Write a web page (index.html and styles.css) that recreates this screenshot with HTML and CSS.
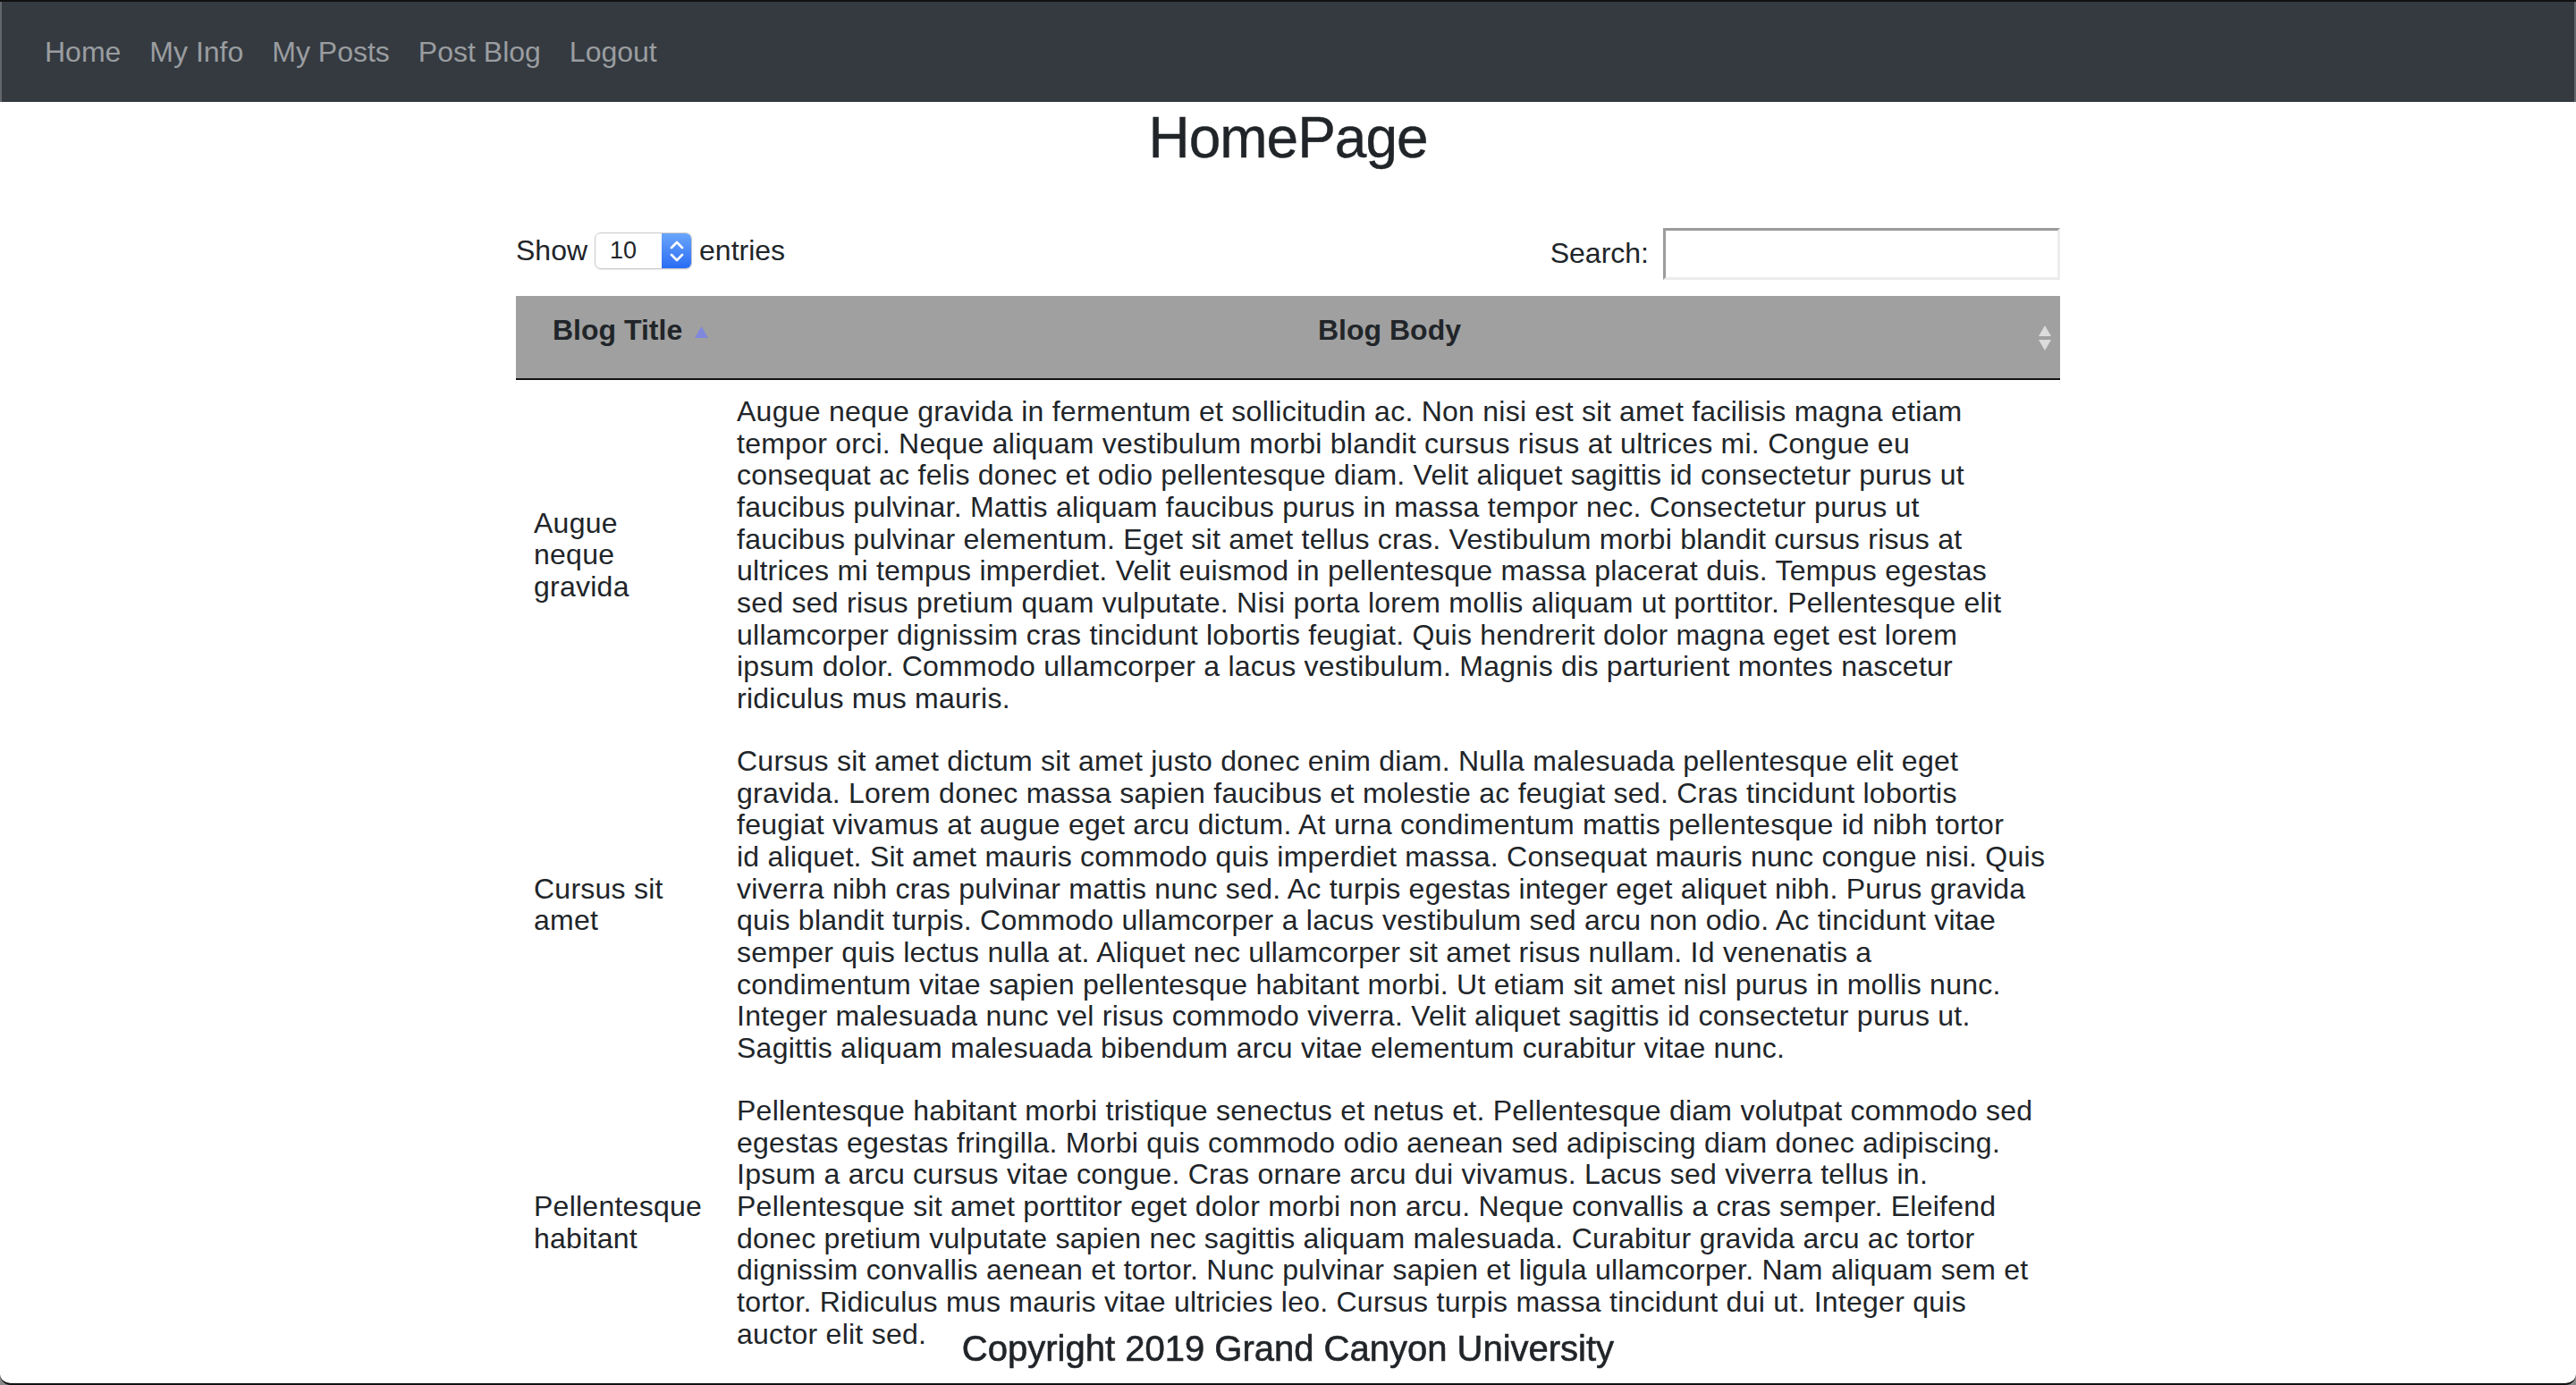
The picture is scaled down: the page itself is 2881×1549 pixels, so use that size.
FILE: index.html
```html
<!DOCTYPE html>
<html lang="en">
<head>
<meta charset="utf-8">
<title>HomePage</title>
<link rel="stylesheet" href="styles.css">
</head>
<body>
<div class="window">
  <nav class="navbar">
    <a class="nav-link" href="#">Home</a>
    <a class="nav-link" href="#">My Info</a>
    <a class="nav-link" href="#">My Posts</a>
    <a class="nav-link" href="#">Post Blog</a>
    <a class="nav-link" href="#">Logout</a>
  </nav>

  <h2 class="page-title">HomePage</h2>

  <div class="blog-wrap">
    <div class="controls">
      <div class="length">
        <span>Show</span>
        <span class="select">
          <span class="select-value">10</span>
          <span class="select-btn">
            <svg width="20" height="30" viewBox="0 0 20 30"><path d="M4 11 L10 5 L16 11" fill="none" stroke="#fff" stroke-width="2.6" stroke-linecap="round" stroke-linejoin="round"/><path d="M4 19 L10 25 L16 19" fill="none" stroke="#fff" stroke-width="2.6" stroke-linecap="round" stroke-linejoin="round"/></svg>
          </span>
        </span>
        <span>entries</span>
      </div>
      <div class="search">
        <span>Search:</span>
        <input class="search-input" type="text">
      </div>
    </div>

    <table class="blog-table">
      <colgroup><col class="col-title"><col class="col-body"></colgroup>
      <thead>
        <tr>
          <th class="th-title">Blog Title<svg class="sort-asc" width="15" height="13" viewBox="0 0 15 13"><path d="M7.5 0 L15 13 L0 13 Z" fill="#7f88dc"/></svg></th>
          <th class="th-body">Blog Body<span class="sort-both"><svg width="14" height="28" viewBox="0 0 14 28"><path d="M7 0 L14 12 L0 12 Z" fill="#dcdcdc"/><path d="M0 16 L14 16 L7 28 Z" fill="#dcdcdc"/></svg></span></th>
        </tr>
      </thead>
      <tbody>
        <tr>
          <td class="title-cell">Augue<br>neque<br>gravida</td>
          <td class="body-cell">Augue neque gravida in fermentum et sollicitudin ac. Non nisi est sit amet facilisis magna etiam<br>tempor orci. Neque aliquam vestibulum morbi blandit cursus risus at ultrices mi. Congue eu<br>consequat ac felis donec et odio pellentesque diam. Velit aliquet sagittis id consectetur purus ut<br>faucibus pulvinar. Mattis aliquam faucibus purus in massa tempor nec. Consectetur purus ut<br>faucibus pulvinar elementum. Eget sit amet tellus cras. Vestibulum morbi blandit cursus risus at<br>ultrices mi tempus imperdiet. Velit euismod in pellentesque massa placerat duis. Tempus egestas<br>sed sed risus pretium quam vulputate. Nisi porta lorem mollis aliquam ut porttitor. Pellentesque elit<br>ullamcorper dignissim cras tincidunt lobortis feugiat. Quis hendrerit dolor magna eget est lorem<br>ipsum dolor. Commodo ullamcorper a lacus vestibulum. Magnis dis parturient montes nascetur<br>ridiculus mus mauris.</td>
        </tr>
        <tr>
          <td class="title-cell">Cursus sit<br>amet</td>
          <td class="body-cell">Cursus sit amet dictum sit amet justo donec enim diam. Nulla malesuada pellentesque elit eget<br>gravida. Lorem donec massa sapien faucibus et molestie ac feugiat sed. Cras tincidunt lobortis<br>feugiat vivamus at augue eget arcu dictum. At urna condimentum mattis pellentesque id nibh tortor<br>id aliquet. Sit amet mauris commodo quis imperdiet massa. Consequat mauris nunc congue nisi. Quis<br>viverra nibh cras pulvinar mattis nunc sed. Ac turpis egestas integer eget aliquet nibh. Purus gravida<br>quis blandit turpis. Commodo ullamcorper a lacus vestibulum sed arcu non odio. Ac tincidunt vitae<br>semper quis lectus nulla at. Aliquet nec ullamcorper sit amet risus nullam. Id venenatis a<br>condimentum vitae sapien pellentesque habitant morbi. Ut etiam sit amet nisl purus in mollis nunc.<br>Integer malesuada nunc vel risus commodo viverra. Velit aliquet sagittis id consectetur purus ut.<br>Sagittis aliquam malesuada bibendum arcu vitae elementum curabitur vitae nunc.</td>
        </tr>
        <tr>
          <td class="title-cell">Pellentesque<br>habitant</td>
          <td class="body-cell">Pellentesque habitant morbi tristique senectus et netus et. Pellentesque diam volutpat commodo sed<br>egestas egestas fringilla. Morbi quis commodo odio aenean sed adipiscing diam donec adipiscing.<br>Ipsum a arcu cursus vitae congue. Cras ornare arcu dui vivamus. Lacus sed viverra tellus in.<br>Pellentesque sit amet porttitor eget dolor morbi non arcu. Neque convallis a cras semper. Eleifend<br>donec pretium vulputate sapien nec sagittis aliquam malesuada. Curabitur gravida arcu ac tortor<br>dignissim convallis aenean et tortor. Nunc pulvinar sapien et ligula ullamcorper. Nam aliquam sem et<br>tortor. Ridiculus mus mauris vitae ultricies leo. Cursus turpis massa tincidunt dui ut. Integer quis<br>auctor elit sed.</td>
        </tr>
      </tbody>
    </table>
  </div>

  <footer class="footer">Copyright 2019 Grand Canyon University</footer>
</div>
</body>
</html>
```

FILE: styles.css
```css
html, body {
  margin: 0;
  padding: 0;
  height: 100%;
  overflow: hidden;
  background: #8a8a8a;
}

.window {
  height: 100vh;
  box-sizing: border-box;
  background: #fff;
  border-top: 2px solid #111;
  border-bottom: 2px solid #111;
  border-radius: 0 0 12px 12px;
  overflow: hidden;
  font-family: "Liberation Sans", Arial, sans-serif;
  color: #212529;
}

.navbar {
  display: flex;
  align-items: center;
  height: 112px;
  padding: 0 32px 0 32px;
  background: #343a40;
  border-left: 2px solid #63676b;
  border-right: 2px solid #63676b;
}

.nav-link {
  padding: 0 16px;
  font-size: 32px;
  line-height: 48px;
  color: #9a9da0;
  text-decoration: none;
}

.page-title {
  margin: 2px 0 16px;
  font-size: 64px;
  font-weight: 400;
  line-height: 1.2;
  text-align: center;
  letter-spacing: -1px;
  -webkit-text-stroke: 0.4px #212529;
}

.blog-wrap {
  width: 1727px;
  margin: 0 auto;
}

.controls {
  display: flex;
  justify-content: space-between;
  align-items: flex-start;
  margin-top: 62px;
  font-size: 32px;
}

.length {
  display: flex;
  align-items: center;
  height: 52px;
  gap: 8px;
}

.select {
  display: flex;
  width: 109px;
  height: 41px;
  box-sizing: border-box;
  border: 1px solid #c9c9c9;
  border-radius: 7px;
  overflow: hidden;
  background: #fff;
  box-shadow: 0 1px 1px rgba(0,0,0,0.08);
}

.select-value {
  flex: 1;
  font-size: 27px;
  line-height: 39px;
  padding-left: 16px;
}

.select-btn {
  width: 33px;
  display: flex;
  align-items: center;
  justify-content: center;
  background: linear-gradient(#6aa6fb, #2a6cf4);
}

.search {
  display: flex;
  align-items: center;
  height: 58px;
  gap: 16px;
}

.search-input {
  width: 444px;
  height: 58px;
  box-sizing: border-box;
  margin: 0;
  border-style: solid;
  border-width: 3px;
  border-color: #9b9b9b #ececec #ececec #9b9b9b;
  background: #fff;
  outline: none;
}

.blog-table {
  width: 1727px;
  margin-top: 18px;
  table-layout: fixed;
  border-collapse: collapse;
}

.col-title { width: 227px; }
.col-body { width: 1500px; }

.blog-table th {
  position: relative;
  background: #a0a0a0;
  font-size: 32px;
  font-weight: 700;
  line-height: 48px;
  padding: 14px 20px 30px;
  border-bottom: 2px solid #111;
  white-space: nowrap;
}

.th-title {
  text-align: left;
  padding-left: 41px !important;
}

.sort-asc {
  margin-left: 14px;
  vertical-align: 2px;
}

.th-body {
  text-align: center;
}

.sort-both {
  position: absolute;
  right: 10px;
  top: 33px;
  line-height: 0;
}

.blog-table td {
  font-size: 32px;
  letter-spacing: 0.25px;
  line-height: 35.7px;
  padding: 18px 20px 16px;
  vertical-align: middle;
}

.title-cell {
  letter-spacing: 0;
}

.body-cell {
  white-space: nowrap;
}

.footer {
  position: fixed;
  left: 0;
  right: 0;
  bottom: 17px;
  text-align: center;
  font-size: 40px;
  font-weight: 500;
  line-height: 48px;
  color: #212529;
  -webkit-text-stroke: 0.6px #212529;
}
```
